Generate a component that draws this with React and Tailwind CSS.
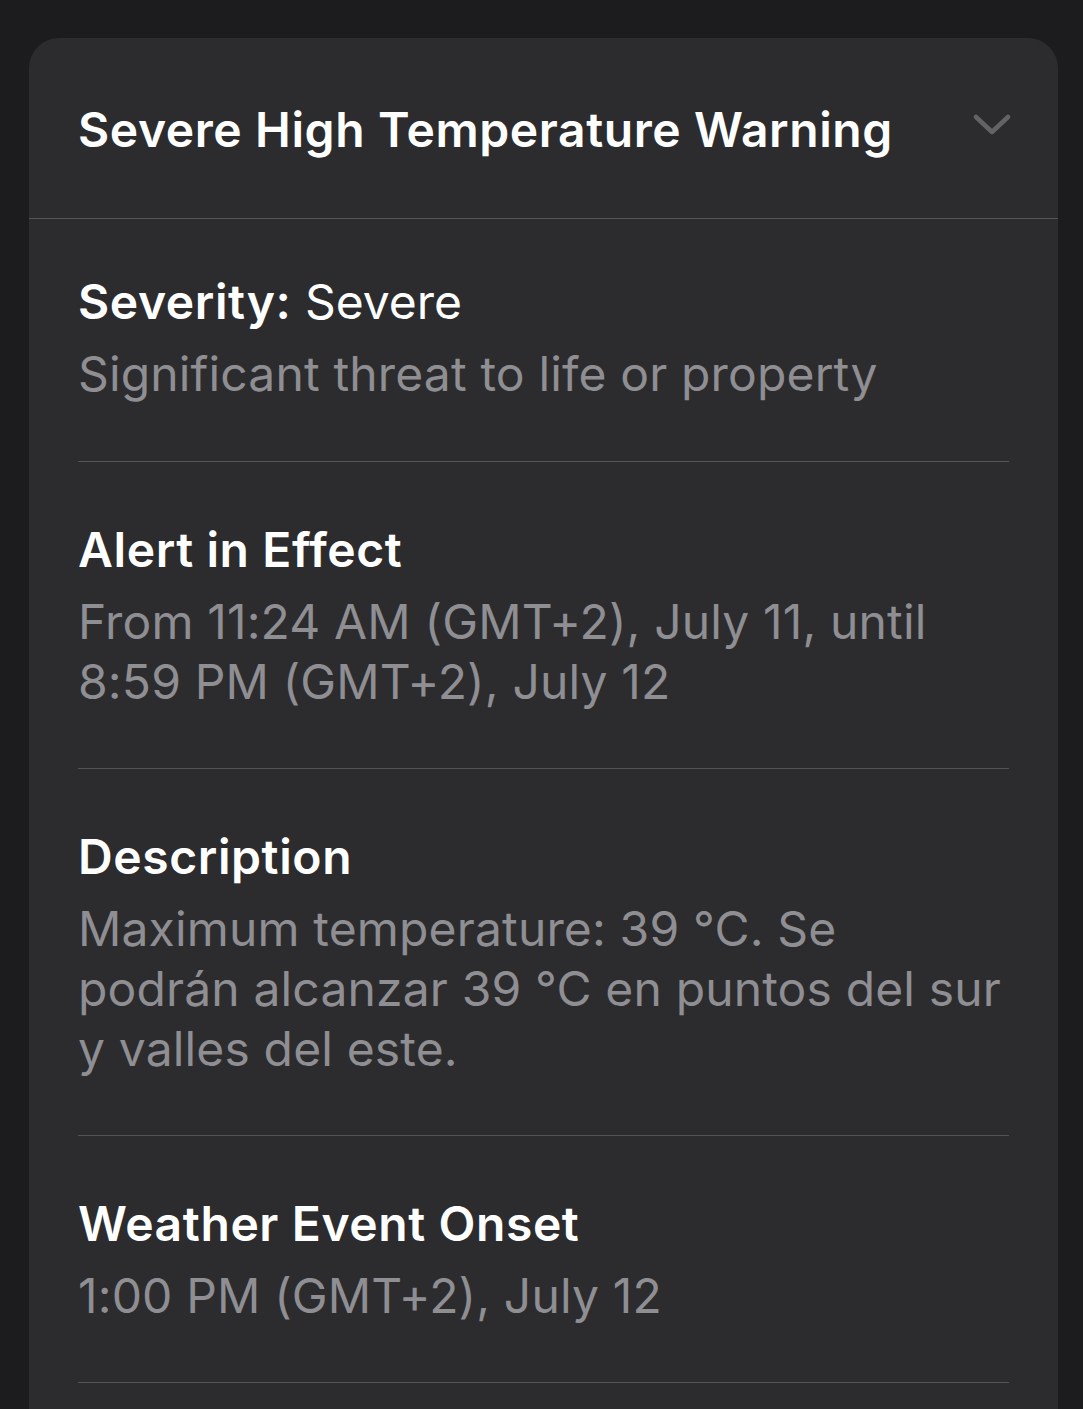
const sections = [
  {
    title: (
      <>
        <span className="font-semibold tracking-[0.6px]">Severity:</span> Severe
      </>
    ),
    lines: ['Significant threat to life or property'],
    first: true,
  },
  {
    title: <span className="font-semibold tracking-[0.6px]">Alert in Effect</span>,
    lines: ['From 11:24 AM (GMT+2), July 11, until', '8:59 PM (GMT+2), July 12'],
  },
  {
    title: <span className="font-semibold tracking-[0.6px]">Description</span>,
    lines: [
      'Maximum temperature: 39 °C. Se',
      'podrán alcanzar 39 °C en puntos del sur',
      'y valles del este.',
    ],
  },
  {
    title: <span className="font-semibold tracking-[0.6px]">Weather Event Onset</span>,
    lines: ['1:00 PM (GMT+2), July 12'],
  },
]

function Chevron() {
  return (
    <svg width="38" height="24" viewBox="0 0 38 24" fill="none" className="text-[#636366]">
      <path d="M3 4 L19 19 L35 4" stroke="currentColor" strokeWidth="4.5" strokeLinecap="round" strokeLinejoin="round" />
    </svg>
  )
}

export default function App() {
  return (
    <div
      className="h-[1409px] overflow-hidden bg-[#1c1c1e] pt-[38px] pl-[29px]"
      style={{ fontFamily: 'Inter, "Liberation Sans", sans-serif' }}
    >
      <div className="w-[1029px] h-[1500px] rounded-[30px] bg-[#2c2c2e]">
        {/* Header */}
        <div className="flex items-center justify-between border-b border-[#545458] pl-[49px] pr-[47px] pt-[62px] pb-[58px]">
          <h1 className="text-[48px] leading-[60px] font-semibold tracking-[0.6px] text-white">
            Severe High Temperature Warning
          </h1>
          <div className="-mt-[10px]">
            <Chevron />
          </div>
        </div>

        {/* Details */}
        <div className="px-[49px]">
          {sections.map((s, i) => (
            <div
              key={i}
              className={`border-b border-[#545458] ${s.first ? 'pt-[53px] pb-[57px]' : 'pt-[58px] pb-[56px]'}`}
            >
              <div className="text-[48px] leading-[60px] text-white">{s.title}</div>
              <div className="mt-[12px] text-[48px] leading-[60px] tracking-[0.15px] text-[#8e8e93]">
                {s.lines.map((l, j) => (
                  <div key={j} className="whitespace-nowrap">{l}</div>
                ))}
              </div>
            </div>
          ))}
        </div>
      </div>
    </div>
  )
}
